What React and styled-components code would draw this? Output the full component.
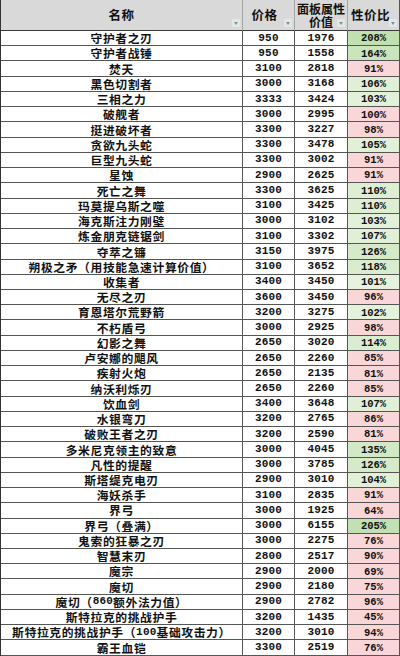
import React from "react";
import styled, { createGlobalStyle } from "styled-components";

const Global = createGlobalStyle`
  html, body { margin: 0; padding: 0; background: #ffffff; }
  body { width: 400px; height: 656px; overflow: hidden; }
`;

const rows = [
  ["守护者之刃", 950, 1976, 208],
  ["守护者战锤", 950, 1558, 164],
  ["焚天", 3100, 2818, 91],
  ["黑色切割者", 3000, 3168, 106],
  ["三相之力", 3333, 3424, 103],
  ["破舰者", 3000, 2995, 100],
  ["挺进破坏者", 3300, 3227, 98],
  ["贪欲九头蛇", 3300, 3478, 105],
  ["巨型九头蛇", 3300, 3002, 91],
  ["星蚀", 2900, 2625, 91],
  ["死亡之舞", 3300, 3625, 110],
  ["玛莫提乌斯之噬", 3100, 3425, 110],
  ["海克斯注力刚壁", 3000, 3102, 103],
  ["炼金朋克链锯剑", 3100, 3302, 107],
  ["夺萃之镰", 3150, 3975, 126],
  ["朔极之矛（用技能急速计算价值）", 3100, 3652, 118],
  ["收集者", 3400, 3450, 101],
  ["无尽之刃", 3600, 3450, 96],
  ["育恩塔尔荒野箭", 3200, 3275, 102],
  ["不朽盾弓", 3000, 2925, 98],
  ["幻影之舞", 2650, 3020, 114],
  ["卢安娜的飓风", 2650, 2260, 85],
  ["疾射火炮", 2650, 2135, 81],
  ["纳沃利烁刃", 2650, 2260, 85],
  ["饮血剑", 3400, 3648, 107],
  ["水银弯刀", 3200, 2765, 86],
  ["破败王者之刃", 3200, 2590, 81],
  ["多米尼克领主的致意", 3000, 4045, 135],
  ["凡性的提醒", 3000, 3785, 126],
  ["斯塔缇克电刃", 2900, 3010, 104],
  ["海妖杀手", 3100, 2835, 91],
  ["界弓", 3000, 1925, 64],
  ["界弓（叠满）", 3000, 6155, 205],
  ["鬼索的狂暴之刃", 3000, 2275, 76],
  ["智慧末刃", 2800, 2517, 90],
  ["魔宗", 2900, 2000, 69],
  ["魔切", 2900, 2180, 75],
  ["魔切（860额外法力值）", 2900, 2782, 96],
  ["斯特拉克的挑战护手", 3200, 1435, 45],
  ["斯特拉克的挑战护手（100基础攻击力）", 3200, 3010, 94],
  ["霸王血铠", 3300, 2519, 76],
];

const Sheet = styled.div`
  display: grid;
  grid-template-columns: 242px 52px 53px 52px;
  grid-template-rows: 31px;
  grid-auto-rows: 15.24px;
  width: 399px;
  border-left: 1.5px solid #333;
  box-sizing: border-box;
  font-family: "Liberation Mono", "Noto Sans CJK SC", monospace;
  color: #111;
`;

const HeaderCell = styled.div`
  position: relative;
  background: #d9d9d9;
  border-right: 1px solid ${(p) => (p.$last ? "#555" : "#a6a6a6")};
  border-bottom: 1.5px solid #3a3a3a;
  box-sizing: border-box;
  display: flex;
  flex-direction: column;
  align-items: center;
  justify-content: center;
  padding-right: ${(p) => p.$pad || "0"};
  font-family: "Noto Sans CJK SC", sans-serif;
  font-weight: 700;
  font-size: ${(p) => p.$size || "12.5px"};
  line-height: 1;
  text-align: center;
  white-space: nowrap;
  letter-spacing: ${(p) => p.$ls || "0.5px"};
`;

const HeadLine = styled.span`
  display: block;
  margin-top: ${(p) => p.$mt || "0"};
`;

const FilterBtn = styled.span`
  position: absolute;
  right: 2px;
  bottom: 3px;
  width: 8px;
  height: 8px;
  background: #e6e6e6;
  display: flex;
  align-items: center;
  justify-content: center;
  &::after {
    content: "";
    border-left: 2.5px solid transparent;
    border-right: 2.5px solid transparent;
    border-top: 3px solid #6f9a9a;
  }
`;

const Cell = styled.div`
  border-right: 1px solid #555;
  border-bottom: 1px solid #555;
  box-sizing: border-box;
  display: flex;
  align-items: center;
  justify-content: center;
  white-space: nowrap;
  line-height: 1;
  background: ${(p) => p.$bg || "#ffffff"};
`;

const NameCell = styled(Cell)`
  font-family: "Noto Sans CJK SC", sans-serif;
  font-weight: 700;
  font-size: 11.8px;
  letter-spacing: 0.6px;
  & > b {
    font-family: "Liberation Mono", monospace;
    font-size: 11px;
    font-weight: 700;
    letter-spacing: 0.2px;
  }
`;

const NumCell = styled(Cell)`
  font-size: 11px;
  font-weight: 700;
  letter-spacing: 0.2px;
`;

const RatioCell = styled(Cell)`
  font-size: 10.5px;
  font-weight: 700;
  padding-top: 1px;
`;

function mix(a, b, t) {
  return a.map((v, i) => Math.round(v + (b[i] - v) * t));
}

function ratioColor(r) {
  if (r <= 100) return "rgb(249,214,216)";
  const t = Math.min(1, Math.sqrt((r - 100) / 108));
  const c = mix([234, 244, 226], [193, 224, 176], t);
  return `rgb(${c[0]},${c[1]},${c[2]})`;
}

function renderName(name) {
  const parts = name.split(/(\d+)/);
  return parts.map((p, i) => (/^\d+$/.test(p) ? <b key={i}>{p}</b> : p));
}

export default function App() {
  return (
    <>
      <Global />
      <Sheet>
        <HeaderCell>
          名称
          <FilterBtn />
        </HeaderCell>
        <HeaderCell $pad="8px">
          价格
          <FilterBtn />
        </HeaderCell>
        <HeaderCell $size="12px" $ls="0px">
          <HeadLine>面板属性</HeadLine>
          <HeadLine $mt="1px">价值</HeadLine>
          <FilterBtn />
        </HeaderCell>
        <HeaderCell $pad="6px" $last>
          性价比
          <FilterBtn />
        </HeaderCell>
        {rows.map(([name, price, value, ratio]) => (
          <React.Fragment key={name}>
            <NameCell>{renderName(name)}</NameCell>
            <NumCell>{price}</NumCell>
            <NumCell>{value}</NumCell>
            <RatioCell $bg={ratioColor(ratio)}>{ratio}%</RatioCell>
          </React.Fragment>
        ))}
      </Sheet>
    </>
  );
}
